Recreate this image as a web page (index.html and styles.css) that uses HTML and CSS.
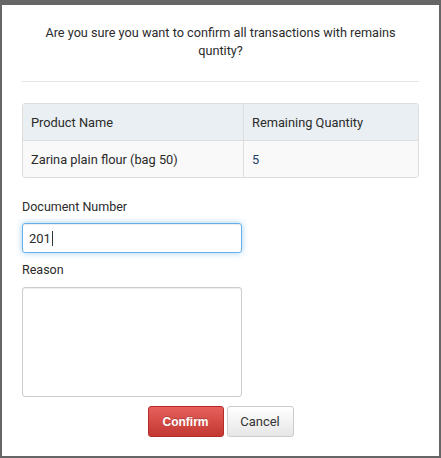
FILE: index.html
```html
<!DOCTYPE html>
<html>
<head>
<meta charset="utf-8">
<link rel="stylesheet" href="styles.css">
</head>
<body>
<div class="modal">
  <div class="title">Are you sure you want to confirm all transactions with remains quntity?</div>
  <div class="table">
    <div class="row head">
      <div class="cell c1">Product Name</div>
      <div class="cell c2">Remaining Quantity</div>
    </div>
    <div class="row body">
      <div class="cell c1">Zarina plain flour (bag 50)</div>
      <div class="cell c2 qty">5</div>
    </div>
  </div>
  <label class="lbl lbl-doc">Document Number</label>
  <div class="input focus"><span>201</span><span class="caret"></span></div>
  <label class="lbl lbl-reason">Reason</label>
  <div class="textarea"></div>
  <div class="actions">
    <button class="btn btn-confirm">Confirm</button>
    <button class="btn btn-cancel">Cancel</button>
  </div>
</div>
</body>
</html>
```
FILE: styles.css
```css
html, body { margin: 0; padding: 0; }
body {
  background: #666;
  font-family: Roboto, "Noto Sans", sans-serif;
  color: #2b2b2b;
  width: 441px;
  height: 458px;
  overflow: hidden;
}
.modal {
  margin: 5px 2px 0 2px;
  height: 451px;
  background: #fff;
  padding: 0 20px;
  box-sizing: border-box;
  display: flex;
  flex-direction: column;
}
.title {
  text-align: center;
  font-size: 12.7px;
  line-height: 18px;
  padding: 19px 0 21px;
  border-bottom: 1px solid #e5e5e5;
}
.table {
  margin-top: 21px;
  border: 1px solid #ddd;
  border-radius: 3px;
  overflow: hidden;
  font-size: 12.8px;
}
.row { display: flex; align-items: stretch; }
.row.head { background: #e9eff3; border-bottom: 1px solid #ddd; height: 36px; }
.row.body { background: #f9f9f9; height: 36px; }
.cell { display: flex; align-items: center; padding-left: 8px; }
.c1 { width: 212px; border-right: 1px solid #ddd; }
.c2 { flex: 1; }
.qty { color: #1f3f66; }
.lbl {
  display: block;
  font-size: 12.5px;
  line-height: 18px;
}
.lbl-doc { margin-top: 20px; }
.lbl-reason { margin-top: 8px; }
.input {
  margin-top: 7px;
  width: 220px;
  height: 30px;
  box-sizing: border-box;
  border: 1px solid #66afe9;
  border-radius: 3px;
  box-shadow: inset 0 1px 1px rgba(0,0,0,.075), 0 0 6px rgba(102,175,233,.6);
  font-size: 13px;
  display: flex;
  align-items: center;
  padding-left: 6px;
}
.caret { display: inline-block; width: 1px; height: 15px; background: #333; margin-left: 1px; }
.textarea {
  margin-top: 8px;
  width: 220px;
  height: 110px;
  box-sizing: border-box;
  border: 1px solid #ccc;
  border-radius: 3px;
  box-shadow: inset 0 1px 1px rgba(0,0,0,.075);
}
.actions {
  margin-top: 9px;
  display: flex;
  justify-content: center;
  gap: 3px;
}
.btn {
  height: 31px;
  box-sizing: border-box;
  border-radius: 3px;
  font-size: 13px;
  padding: 0;
  margin: 0;
}
.btn-confirm {
  width: 76px;
  border: 1px solid #b52b27;
  background: linear-gradient(#e7605c, #c23731);
  color: #fff;
  font-family: "Liberation Sans", Arial, sans-serif;
  font-size: 12px;
  font-weight: bold;
  text-shadow: 0 -1px 0 rgba(0,0,0,.2);
}
.btn-cancel {
  width: 67px;
  border: 1px solid #ccc;
  background: linear-gradient(#fff, #e6e6e6);
  color: #333;
  font-family: Roboto, "Noto Sans", sans-serif;
}
```
